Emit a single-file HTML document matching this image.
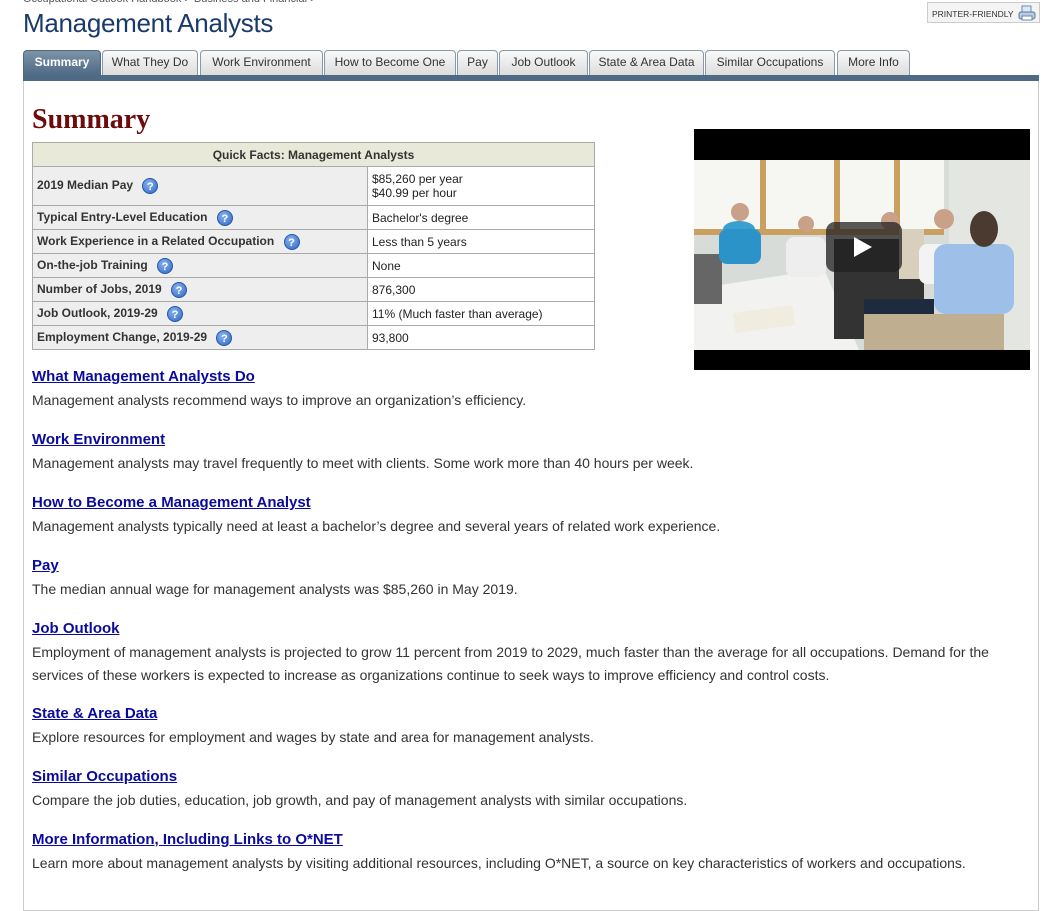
<!DOCTYPE html>
<html><head><meta charset="utf-8"><style>
*{box-sizing:border-box;margin:0;padding:0}
body{width:1046px;height:896px;background:#fff;font-family:"Liberation Sans",sans-serif;position:relative;overflow:hidden;color:#333}
.crumb{position:absolute;left:23px;top:-7px;font-size:11px;color:#555}
h1{position:absolute;left:23px;top:8px;font-size:26px;font-weight:normal;color:#1a3a6b;letter-spacing:-0.3px}
.pf{position:absolute;left:927px;top:2px;width:113px;height:21px;border:1px solid #ccc;background:#f4f4f4;font-size:8.5px;color:#333;padding:6px 0 0 4px}
.pf svg{position:absolute;right:3px;top:2px}
.tabs{position:absolute;left:23px;top:50px;height:25px}
.tab{position:absolute;top:0;height:25px;border:1px solid #8a99aa;border-bottom:none;border-radius:4px 4px 0 0;background:linear-gradient(#fafafa,#dcdcdc);font-size:12px;color:#333;text-align:center;line-height:23px}
.tab.on{background:linear-gradient(#7d93a8,#4e6a85);color:#fff;font-weight:bold;border-color:#4e6a85}
.bar{position:absolute;left:23px;top:75px;width:1016px;height:6px;background:#4e6a85}
.box{position:absolute;left:23px;top:81px;width:1016px;height:830px;border:1px solid #ccc;border-top:none}
h2{position:absolute;left:32px;top:104px;font-family:"Liberation Serif",serif;font-size:28px;color:#6b0b0b;font-weight:bold}
table{position:absolute;left:32px;top:142px;width:563px;border-collapse:collapse;font-size:12px}
td,th{border:1px solid #aaa;padding:0 4px;height:24px}
th{background:#e9e9da;height:24px;font-size:12px}
td.l{background:#eee;font-weight:bold;width:335px;color:#333}
td.r{background:#fff;color:#222}
.q{display:inline-block;width:16px;height:16px;border-radius:50%;background:radial-gradient(circle at 40% 35%,#8ab4ee,#2d65c4);color:#fff;font-size:11px;font-weight:bold;text-align:center;line-height:16px;vertical-align:middle;margin-left:6px;border:1px solid #2558ad}
.vid{position:absolute;left:694px;top:129px;width:336px;height:241px;background:#000}
.sec{position:absolute;left:32px;width:965px}
.sec a{display:block;font-size:15px;font-weight:bold;color:#0a0a9c;text-decoration:underline;height:21px}
.sec p{font-size:14px;line-height:22.5px;color:#333}
</style></head><body>
<div class="crumb">Occupational Outlook Handbook &gt; Business and Financial &gt;</div>
<h1>Management Analysts</h1>
<div class="pf">PRINTER-FRIENDLY<svg width="18" height="17" viewBox="0 0 18 17"><rect x="4" y="1" width="9" height="7" fill="#dde8f5" stroke="#6a8ab0"/><rect x="1" y="7" width="16" height="7" rx="2" fill="#b9cbe0" stroke="#5a7aa0"/><rect x="4" y="11" width="10" height="4" fill="#fff" stroke="#6a8ab0"/></svg></div>
<div class="tabs">
<div class="tab on" style="left:0;width:78px">Summary</div>
<div class="tab" style="left:79px;width:96px">What They Do</div>
<div class="tab" style="left:177px;width:123px">Work Environment</div>
<div class="tab" style="left:301px;width:132px">How to Become One</div>
<div class="tab" style="left:434px;width:41px">Pay</div>
<div class="tab" style="left:476px;width:89px">Job Outlook</div>
<div class="tab" style="left:566px;width:115px">State &amp; Area Data</div>
<div class="tab" style="left:682px;width:130px">Similar Occupations</div>
<div class="tab" style="left:814px;width:73px">More Info</div>
</div>
<div class="bar"></div>
<div class="box"></div>
<h2>Summary</h2>
<table>
<tr><th colspan="2">Quick Facts: Management Analysts</th></tr>
<tr><td class="l" style="height:39px">2019 Median Pay <span class="q">?</span></td><td class="r">$85,260 per year<br>$40.99 per hour</td></tr>
<tr><td class="l">Typical Entry-Level Education <span class="q">?</span></td><td class="r">Bachelor's degree</td></tr>
<tr><td class="l">Work Experience in a Related Occupation <span class="q">?</span></td><td class="r">Less than 5 years</td></tr>
<tr><td class="l">On-the-job Training <span class="q">?</span></td><td class="r">None</td></tr>
<tr><td class="l">Number of Jobs, 2019 <span class="q">?</span></td><td class="r">876,300</td></tr>
<tr><td class="l">Job Outlook, 2019-29 <span class="q">?</span></td><td class="r">11% (Much faster than average)</td></tr>
<tr><td class="l">Employment Change, 2019-29 <span class="q">?</span></td><td class="r">93,800</td></tr>
</table>
<div class="vid"><svg width="336" height="241" viewBox="0 0 336 241">
<rect x="0" y="31" width="336" height="190" fill="#d8dcd8"/>
<rect x="0" y="31" width="250" height="70" fill="#f6f7f2"/>
<rect x="0" y="100" width="250" height="6" fill="#c9a060"/>
<rect x="66" y="31" width="6" height="72" fill="#c9a060"/><rect x="140" y="31" width="6" height="72" fill="#c9a060"/><rect x="200" y="31" width="6" height="72" fill="#c9a060"/>
<rect x="255" y="31" width="81" height="190" fill="#e4e6e2"/>
<polygon points="0,160 130,140 165,221 0,221" fill="#f2f2f0"/>
<rect x="0" y="125" width="28" height="50" fill="#666"/>
<ellipse cx="45" cy="100" rx="16" ry="8" fill="#3aa0d0"/><rect x="25" y="100" width="42" height="35" rx="8" fill="#2c93c9"/><circle cx="46" cy="83" r="9" fill="#c9a088"/>
<rect x="92" y="108" width="40" height="40" rx="8" fill="#eee"/><circle cx="112" cy="95" r="8" fill="#c9a088"/>
<rect x="140" y="110" width="90" height="100" fill="#333"/>
<circle cx="196" cy="92" r="9" fill="#c9a088"/><rect x="205" y="100" width="25" height="50" fill="#d8cfbc"/>
<rect x="225" y="115" width="50" height="40" rx="8" fill="#f3f3f3"/><circle cx="250" cy="90" r="10" fill="#c9a088"/>
<rect x="170" y="170" width="70" height="51" fill="#1e2a3e"/>
<rect x="240" y="115" width="80" height="70" rx="12" fill="#9ec0e8"/><ellipse cx="290" cy="100" rx="14" ry="18" fill="#4a3a30"/><rect x="170" y="185" width="140" height="36" fill="#bfae90"/>
<rect x="40" y="180" width="60" height="20" fill="#f0ece0" transform="rotate(-8 70 190)"/>
<rect x="132" y="93" width="76" height="50" rx="9" fill="#222" fill-opacity="0.75"/>
<polygon points="160,108 160,128 178,118" fill="#fff"/>
</svg></div>
<div class="sec" style="top:368px"><a>What Management Analysts Do</a><p>Management analysts recommend ways to improve an organization’s efficiency.</p></div>
<div class="sec" style="top:431px"><a>Work Environment</a><p>Management analysts may travel frequently to meet with clients. Some work more than 40 hours per week.</p></div>
<div class="sec" style="top:494px"><a>How to Become a Management Analyst</a><p>Management analysts typically need at least a bachelor’s degree and several years of related work experience.</p></div>
<div class="sec" style="top:557px"><a>Pay</a><p>The median annual wage for management analysts was $85,260 in May 2019.</p></div>
<div class="sec" style="top:620px"><a>Job Outlook</a><p>Employment of management analysts is projected to grow 11 percent from 2019 to 2029, much faster than the average for all occupations. Demand for the services of these workers is expected to increase as organizations continue to seek ways to improve efficiency and control costs.</p></div>
<div class="sec" style="top:705px"><a>State &amp; Area Data</a><p>Explore resources for employment and wages by state and area for management analysts.</p></div>
<div class="sec" style="top:768px"><a>Similar Occupations</a><p>Compare the job duties, education, job growth, and pay of management analysts with similar occupations.</p></div>
<div class="sec" style="top:831px"><a>More Information, Including Links to O*NET</a><p>Learn more about management analysts by visiting additional resources, including O*NET, a source on key characteristics of workers and occupations.</p></div>
</body></html>
